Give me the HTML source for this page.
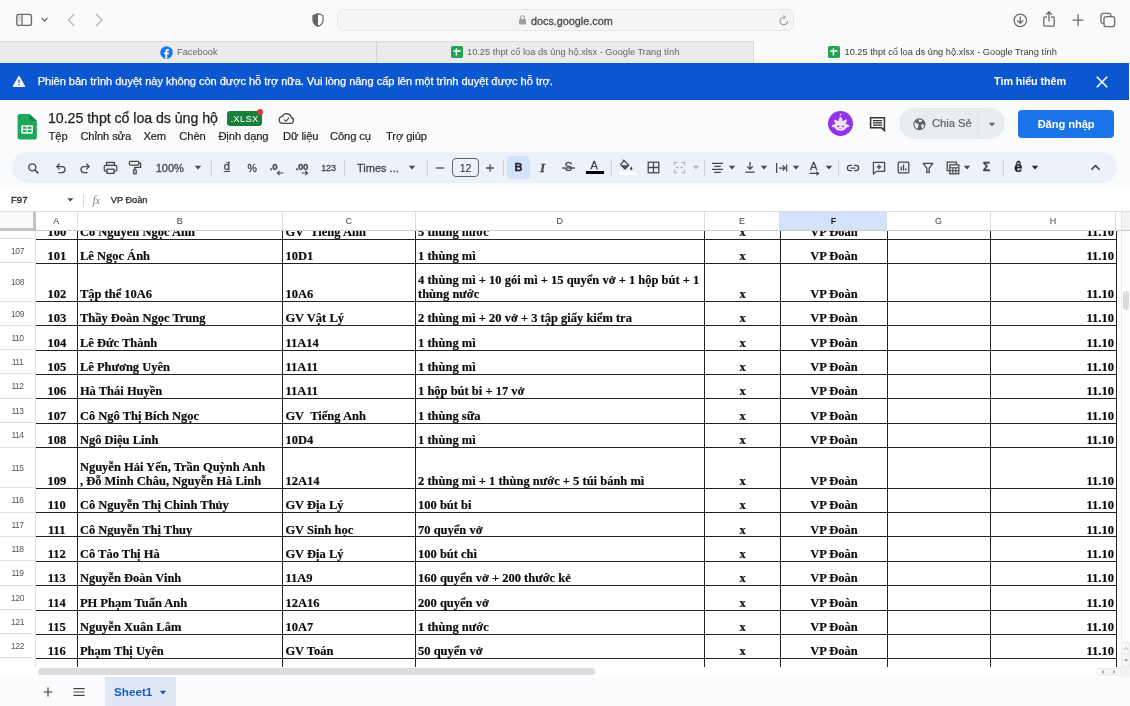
<!DOCTYPE html>
<html><head><meta charset="utf-8">
<style>
*{box-sizing:border-box;margin:0;padding:0}
html,body{width:1130px;height:706px;overflow:hidden;background:#fff;font-family:"Liberation Sans",sans-serif;}
.abs{position:absolute}
#root{position:relative;width:1130px;height:706px;overflow:hidden;will-change:transform}
/* Safari chrome */
#top{left:0;top:0;width:1130px;height:41px;background:#fafafa}
#url{left:337px;top:9px;width:457px;height:22px;border-radius:6px;background:#f5f5f5;border:1px solid #e7e7e7}
#urltxt{left:531px;top:14.5px;font-size:10.8px;color:#484848;-webkit-text-stroke:0.3px;letter-spacing:0px}
#tabs{left:0;top:41px;width:1130px;height:22px;background:#ebebeb;border-top:1px solid #dcdcdc}
.tab{top:41px;height:22px;font-size:9.25px;color:#4a4a4a;line-height:23px;white-space:nowrap}
#tab3{left:753px;width:377px;background:#fafafa;border-left:1px solid #d9d9d9}
#tabsep{left:376px;top:42px;width:1px;height:21px;background:#d4d4d4}
/* banner */
#banner{left:0;top:63px;width:1129.3px;height:37.2px;background:#0b57d0;color:#fff}
#bantxt{left:37.7px;top:75px;font-size:11.1px;color:#fff;-webkit-text-stroke:0.25px #fff;white-space:nowrap;letter-spacing:-0.05px}
#banmore{left:994px;top:75px;font-size:10.8px;color:#fff;white-space:nowrap;font-weight:bold;letter-spacing:-0.1px}
/* sheets header */
#hdr{left:0;top:100px;width:1130px;height:111px;background:#f9fbfd}
#title{left:48px;top:110px;font-size:14.2px;color:#1f1f1f;-webkit-text-stroke:0.25px;white-space:nowrap;letter-spacing:-0.05px}
.menu{top:130px;font-size:11.2px;color:#1f1f1f;-webkit-text-stroke:0.2px;white-space:nowrap;letter-spacing:-0.1px}
#xlsx{left:227px;top:111px;width:35px;height:15px;border-radius:3px;background:#188038;color:#fff;font-size:9.5px;line-height:15px;text-align:center;letter-spacing:0.2px}
#reddot{left:257px;top:109px;width:6px;height:6px;border-radius:3px;background:#e53935}
#share{left:899px;top:108px;width:106px;height:31px;border-radius:16px;background:#e9ecf0}
#sharediv{left:978px;top:108px;width:1px;height:31px;background:#e1e5ea}
#sharetxt{left:932px;top:117px;font-size:11.2px;color:#5f6368;-webkit-text-stroke:0.2px #5f6368;white-space:nowrap}
#login{left:1018px;top:110px;width:96.2px;height:28px;border-radius:4px;background:#1a73e8;color:#fff;font-size:11.2px;font-weight:bold;text-align:center;line-height:28px;letter-spacing:-0.1px}
#avatar{left:828px;top:111px;width:25px;height:25px;border-radius:13px;background:#9334e6}
#tb{left:12px;top:152px;width:1105px;height:31px;border-radius:16px;background:#edf2fa}
.tbt{font-size:12px;color:#444746;-webkit-text-stroke:0.3px;white-space:nowrap}
.sep{top:159.5px;width:1px;height:16px;background:#cdd0d6}
#fbar{left:0;top:187.5px;width:1130px;height:24px;background:#fff;border-bottom:1px solid #e1e1e1}
#cellref{left:11px;top:194px;font-size:9.6px;color:#1f1f1f;-webkit-text-stroke:0.3px}
#fxval{left:110.8px;top:194.6px;font-size:9.2px;color:#1f1f1f;-webkit-text-stroke:0.25px;white-space:nowrap}
/* grid */
#grid{left:0;top:211.5px;width:1130px;height:455.5px;background:#fff;overflow:hidden}
.ch{top:0;height:19.3px;background:#fff;border-right:1px solid #dadce0;border-bottom:1px solid #c8cacc;font-size:9px;color:#444;text-align:center;line-height:19.6px}
.rh{left:0;width:36px;background:#fff;border-right:1px solid #dadce0;border-bottom:1px solid #e1e1e1;font-size:8.5px;color:#54585d;text-align:center;letter-spacing:-0.45px}
.c{position:absolute;font-family:"Liberation Serif",serif;font-weight:bold;font-size:12.5px;color:#0c0c0c;-webkit-text-stroke:0.18px #0c0c0c;white-space:nowrap;line-height:14.6px}
.hl{position:absolute;left:36px;width:1081px;height:1px;background:#222}
.vl{position:absolute;top:0;width:1px;height:437px;background:#222}
#bottom{left:0;top:677px;width:1130px;height:29px;background:#f9fbfd}
#hscroll{left:0;top:667px;width:1130px;height:10px;background:#fff}
#hthumb{left:38px;top:668px;width:557px;height:7px;border-radius:4px;background:#dadce0}
#sheettab{left:105px;top:677px;width:71px;height:29px;background:#e0e8f6;color:#1a5cc8;font-size:11.7px;font-weight:bold;line-height:30px;padding-left:9px}
</style></head><body><div id="root">
<div id="top" class="abs"></div>
<!-- sidebar icon -->
<svg class="abs" style="left:15px;top:12px" width="20" height="16" viewBox="0 0 20 16"><rect x="1.8" y="2.4" width="14.6" height="11" rx="2.2" fill="none" stroke="#6b6b6b" stroke-width="1.4"/><line x1="7" y1="2.4" x2="7" y2="13.4" stroke="#6b6b6b" stroke-width="1.3"/><line x1="3.6" y1="5" x2="5.2" y2="5" stroke="#8a8a8a" stroke-width="0.8"/><line x1="3.6" y1="6.8" x2="5.2" y2="6.8" stroke="#8a8a8a" stroke-width="0.8"/><line x1="3.6" y1="8.6" x2="5.2" y2="8.6" stroke="#8a8a8a" stroke-width="0.8"/></svg>
<svg class="abs" style="left:40px;top:16px" width="10" height="8" viewBox="0 0 10 8"><path d="M2 2.4 L4.6 5 L7.2 2.4" fill="none" stroke="#606060" stroke-width="1.3" stroke-linecap="round" stroke-linejoin="round"/></svg>
<svg class="abs" style="left:65px;top:12px" width="12" height="16" viewBox="0 0 12 16"><path d="M8.8 2.6 L3.4 8 L8.8 13.4" fill="none" stroke="#b9b9b9" stroke-width="1.4" stroke-linecap="round" stroke-linejoin="round"/></svg>
<svg class="abs" style="left:93px;top:12px" width="12" height="16" viewBox="0 0 12 16"><path d="M3.6 2.6 L9 8 L3.6 13.4" fill="none" stroke="#b9b9b9" stroke-width="1.4" stroke-linecap="round" stroke-linejoin="round"/></svg>
<!-- shield -->
<svg class="abs" style="left:311px;top:12px" width="14" height="16" viewBox="0 0 14 16"><path d="M7 1.6 L12 3.5 V8 C12 11 10 13.2 7 14.4 C4 13.2 2 11 2 8 V3.5 Z" fill="#fff" stroke="#6c6c6c" stroke-width="1.3" stroke-linejoin="round"/><path d="M7 1.6 L2 3.5 V8 C2 11 4 13.2 7 14.4 Z" fill="#666"/></svg>
<div id="url" class="abs"></div>
<!-- lock -->
<svg class="abs" style="left:518px;top:14px" width="9" height="12" viewBox="0 0 9 12"><rect x="1" y="5" width="7" height="5.6" rx="1" fill="#a0a0a0"/><path d="M2.6 5.2 V3.6 a1.9 1.9 0 0 1 3.8 0 V5.2" fill="none" stroke="#a0a0a0" stroke-width="1.1"/></svg>
<div id="urltxt" class="abs">docs.google.com</div>
<!-- reload -->
<svg class="abs" style="left:778px;top:14px" width="12" height="13" viewBox="0 0 12 13"><path d="M9.6 7 A3.8 3.8 0 1 1 6 3.2" fill="none" stroke="#8a8a8a" stroke-width="1"/><path d="M5.4 1.2 L7.6 3.2 L5.4 5.2" fill="none" stroke="#8a8a8a" stroke-width="1" stroke-linejoin="round"/></svg>
<!-- download -->
<svg class="abs" style="left:1012px;top:12px" width="17" height="17" viewBox="0 0 17 17"><circle cx="8.3" cy="8.4" r="6.2" fill="none" stroke="#6c6c6c" stroke-width="1.25"/><path d="M8.3 5 V11 M5.8 8.7 L8.3 11.2 L10.8 8.7" fill="none" stroke="#6c6c6c" stroke-width="1.3" stroke-linecap="round" stroke-linejoin="round"/></svg>
<!-- share -->
<svg class="abs" style="left:1041px;top:10px" width="16" height="18" viewBox="0 0 16 18"><path d="M5.4 7 H4 a1.2 1.2 0 0 0 -1.2 1.2 V15 a1.2 1.2 0 0 0 1.2 1.2 H12 a1.2 1.2 0 0 0 1.2 -1.2 V8.2 A1.2 1.2 0 0 0 12 7 H10.6" fill="none" stroke="#6c6c6c" stroke-width="1.3" stroke-linecap="round"/><path d="M8 11 V2 M5.4 4.4 L8 1.8 L10.6 4.4" fill="none" stroke="#6c6c6c" stroke-width="1.3" stroke-linecap="round" stroke-linejoin="round"/></svg>
<!-- plus -->
<svg class="abs" style="left:1071px;top:13px" width="14" height="14" viewBox="0 0 14 14"><path d="M7.1 2 V12.2 M2 7.1 H12.2" stroke="#6c6c6c" stroke-width="1.35" stroke-linecap="round"/></svg>
<!-- tabs -->
<svg class="abs" style="left:1099px;top:12px" width="18" height="17" viewBox="0 0 18 17"><rect x="5" y="4.6" width="10.6" height="10" rx="2.2" fill="#fafafa" stroke="#6c6c6c" stroke-width="1.3"/><path d="M4.8 11.4 H4 a2 2 0 0 1 -2 -2 V3.4 a2 2 0 0 1 2 -2 H9.8 a2 2 0 0 1 2 2 V4.4" fill="none" stroke="#6c6c6c" stroke-width="1.3"/></svg>
<!-- tab bar -->
<div id="tabs" class="abs"></div>
<div id="tab3" class="abs tab"></div>
<div id="tabsep" class="abs"></div>
<!-- fb -->
<svg class="abs" style="left:159.5px;top:45.5px" width="13" height="13" viewBox="0 0 13 13"><circle cx="6.5" cy="6.5" r="6.3" fill="#1877f2"/><path d="M7.2 12.6 V8.2 H8.7 L9 6.5 H7.2 V5.4 c0 -.6 .3 -.9 .9 -.9 H9 V3 C8.7 2.96 8.2 2.9 7.7 2.9 C6.3 2.9 5.4 3.7 5.4 5.2 V6.5 H3.9 V8.2 H5.4 V12.6 Z" fill="#fff"/></svg>
<div class="abs tab" style="left:177px;color:#666">Facebook</div>
<svg class="abs" style="left:450.5px;top:46px" width="12" height="12" viewBox="0 0 12 12"><rect x="0" y="0" width="12" height="12" rx="1.8" fill="#23a455"/><path d="M2.4 5 H9.6 M5.4 2.6 V9.6" stroke="#fff" stroke-width="1.5"/></svg>
<div class="abs tab" style="left:467px;color:#666">10.25 thpt cổ loa ds ủng hộ.xlsx - Google Trang tính</div>
<svg class="abs" style="left:827.5px;top:46px" width="12" height="12" viewBox="0 0 12 12"><rect x="0" y="0" width="12" height="12" rx="1.8" fill="#23a455"/><path d="M2.4 5 H9.6 M5.4 2.6 V9.6" stroke="#fff" stroke-width="1.5"/></svg>
<div class="abs tab" style="left:844.5px;color:#3a3a3a">10.25 thpt cổ loa ds ủng hộ.xlsx - Google Trang tính</div>

<div id="banner" class="abs"></div>
<svg class="abs" style="left:12px;top:75px" width="14" height="13" viewBox="0 0 14 13"><path d="M7 1.2 L12.8 11.4 H1.2 Z" fill="#fff" stroke="#fff" stroke-width="1" stroke-linejoin="round"/><rect x="6.4" y="4.6" width="1.2" height="3.6" fill="#0b57d0"/><rect x="6.4" y="9" width="1.2" height="1.2" fill="#0b57d0"/></svg>
<div id="bantxt" class="abs">Phiên bản trình duyệt này không còn được hỗ trợ nữa. Vui lòng nâng cấp lên một trình duyệt được hỗ trợ.</div>
<div id="banmore" class="abs">Tìm hiểu thêm</div>
<svg class="abs" style="left:1095px;top:75px" width="14" height="14" viewBox="0 0 14 14"><path d="M1.8 1.8 L12.2 12.2 M12.2 1.8 L1.8 12.2" stroke="#fff" stroke-width="1.6" stroke-linecap="butt"/></svg>

<div id="hdr" class="abs"></div>
<!-- sheets logo -->
<svg class="abs" style="left:16.6px;top:112.6px" width="20.4" height="27.2" viewBox="0 0 22 30" preserveAspectRatio="none"><path d="M2.8 1 H13.6 L21.4 8.8 V27 a2.2 2.2 0 0 1 -2.2 2.2 H2.8 a2.2 2.2 0 0 1 -2.2 -2.2 V3.2 a2.2 2.2 0 0 1 2.2 -2.2 Z" fill="#1fa65c"/><path d="M13.6 1 L21.4 8.8 H15.4 A1.8 1.8 0 0 1 13.6 7 Z" fill="#16884a"/><rect x="4.6" y="13.4" width="12.6" height="9.4" rx="0.9" fill="#eaf7ee"/><rect x="6.4" y="15.2" width="3.8" height="2.2" fill="#1fa65c"/><rect x="11.8" y="15.2" width="3.8" height="2.2" fill="#1fa65c"/><rect x="6.4" y="18.8" width="3.8" height="2.2" fill="#1fa65c"/><rect x="11.8" y="18.8" width="3.8" height="2.2" fill="#1fa65c"/></svg>
<div id="title" class="abs">10.25 thpt cổ loa ds ủng hộ</div>
<div id="xlsx" class="abs">.XLSX</div>
<div id="reddot" class="abs"></div>
<!-- cloud -->
<svg class="abs" style="left:278px;top:112px" width="17" height="13" viewBox="0 0 17 13"><path d="M4.6 11.4 H12.6 a3 3 0 0 0 .6 -5.9 A4.6 4.6 0 0 0 4.4 4.6 A3.4 3.4 0 0 0 4.6 11.4 Z" fill="none" stroke="#444746" stroke-width="1.3" stroke-linejoin="round"/><path d="M6.2 7.6 L8 9.2 L11 5.8" fill="none" stroke="#444746" stroke-width="1.2"/></svg>
<div class="abs menu" style="left:48.6px">Tệp</div>
<div class="abs menu" style="left:80.4px">Chỉnh sửa</div>
<div class="abs menu" style="left:143.4px">Xem</div>
<div class="abs menu" style="left:179.3px">Chèn</div>
<div class="abs menu" style="left:218.4px">Định dạng</div>
<div class="abs menu" style="left:283px">Dữ liệu</div>
<div class="abs menu" style="left:330px">Công cụ</div>
<div class="abs menu" style="left:386px">Trợ giúp</div>
<!-- avatar -->
<div id="avatar" class="abs"></div>
<svg class="abs" style="left:828px;top:111px" width="25" height="25" viewBox="0 0 25 25"><path d="M12.5 5.6 C14 7.4 14.6 9 14.4 10.6 C15.6 9.4 17 8.8 18.8 8.8 C18.8 10.6 18.2 12 17.2 13 C19.6 13.2 21 14.2 21.4 15.4 C20.4 16 19.4 16.2 18.6 16.2 C17.6 18.6 15.2 19.8 12.5 19.8 C9.8 19.8 7.4 18.6 6.4 16.2 C5.6 16.2 4.6 16 3.6 15.4 C4 14.2 5.4 13.2 7.8 13 C6.8 12 6.2 10.6 6.2 8.8 C8 8.8 9.4 9.4 10.6 10.6 C10.4 9 11 7.4 12.5 5.6 Z" fill="#f1e4fb"/><circle cx="12.5" cy="3.6" r="0.8" fill="#f1e4fb"/><ellipse cx="10.1" cy="15.3" rx="1.25" ry="0.9" fill="#9334e6"/><ellipse cx="14.9" cy="15.3" rx="1.25" ry="0.9" fill="#9334e6"/><path d="M11.4 17.6 Q12.5 18.3 13.6 17.6" fill="none" stroke="#9334e6" stroke-width="0.6"/></svg>
<!-- comment icon -->
<svg class="abs" style="left:868.5px;top:116px" width="17" height="16" viewBox="0 0 17 16"><path d="M1.6 1.8 H15.4 V14.6 L12.4 11.8 H1.6 Z" fill="none" stroke="#333" stroke-width="1.5" stroke-linejoin="miter"/><path d="M4 4.6 H13 M4 6.8 H13 M4 9 H13" stroke="#333" stroke-width="1.25"/></svg>
<div id="share" class="abs"></div>
<div id="sharediv" class="abs"></div>
<svg class="abs" style="left:913px;top:117.5px" width="13" height="13" viewBox="0 0 13 13"><circle cx="6.4" cy="6.3" r="6" fill="#5f6368"/><path d="M1.7 4.6 C2.6 4.4 3.4 4.8 4 5.4 C4.6 6 5.6 6 5.8 6.8 C6 7.6 5.2 8 5.2 8.8 C5.2 9.6 4.8 10.4 4.2 10.8 C2.6 10 1.5 8.3 1.5 6.3 C1.5 5.7 1.6 5.1 1.7 4.6 Z" fill="#e9ecf0"/><path d="M5.6 1.5 C6.8 1.3 8.2 1.6 9.2 2.4 C9 3.2 8.2 3.4 7.8 4 C7.4 4.6 6.6 4.4 6.2 3.8 C5.8 3.2 5.4 2.3 5.6 1.5 Z" fill="#e9ecf0"/><path d="M8.4 6.4 C9.4 6 10.6 6.4 11.2 7.2 C11 8.6 10.2 9.8 9.2 10.6 C8.6 9.6 7.8 7.6 8.4 6.4 Z" fill="#e9ecf0"/></svg>
<div id="sharetxt" class="abs">Chia Sẻ</div>
<svg class="abs" style="left:988px;top:122px" width="8" height="5" viewBox="0 0 8 5"><path d="M0.9 0.8 H7.1 L4 4.2 Z" fill="#5f6368"/></svg>
<div id="login" class="abs">Đăng nhập</div>
<!-- toolbar -->
<div id="tb" class="abs"></div>
<div class="abs" style="left:507px;top:155.5px;width:23px;height:23px;border-radius:4px;background:#d3e3fd"></div>
<div class="abs sep" style="left:211px"></div>
<div class="abs sep" style="left:344px"></div>
<div class="abs sep" style="left:427px"></div>
<div class="abs sep" style="left:503px"></div>
<div class="abs sep" style="left:611px"></div>
<div class="abs sep" style="left:704px"></div>
<div class="abs sep" style="left:838px"></div>
<div class="abs sep" style="left:1003px"></div>
<svg class="abs" style="left:27.3px;top:161.5px" width="13" height="13" viewBox="0 0 13 13"><circle cx="5.3" cy="5.3" r="3.5" fill="none" stroke="#444746" stroke-width="1.35"/><path d="M7.9 7.9 L11.4 11.4" stroke="#444746" stroke-width="1.5" stroke-linecap="butt"/></svg>
<svg class="abs" style="left:54.3px;top:162.0px" width="13" height="12" viewBox="0 0 13 12"><path d="M3.4 4.6 H8 a3 3 0 0 1 0 6 H4.4" fill="none" stroke="#444746" stroke-width="1.25"/><path d="M5.6 1.8 L2.8 4.6 L5.6 7.4" fill="none" stroke="#444746" stroke-width="1.25"/></svg>
<svg class="abs" style="left:78.5px;top:162.0px" width="13" height="12" viewBox="0 0 13 12"><path d="M9.6 4.6 H5 a3 3 0 0 0 0 6 H8.6" fill="none" stroke="#444746" stroke-width="1.25"/><path d="M7.4 1.8 L10.2 4.6 L7.4 7.4" fill="none" stroke="#444746" stroke-width="1.25"/></svg>
<svg class="abs" style="left:102.8px;top:160.5px" width="15" height="14" viewBox="0 0 15 14"><rect x="3.6" y="1.4" width="7.8" height="3" fill="none" stroke="#444746" stroke-width="1.3"/><rect x="1.2" y="4.4" width="12.6" height="5.8" rx="1.6" fill="none" stroke="#444746" stroke-width="1.25"/><rect x="4" y="8.2" width="7" height="4.2" fill="#edf2fa" stroke="#444746" stroke-width="1.3"/></svg>
<svg class="abs" style="left:128.0px;top:160.0px" width="14" height="15" viewBox="0 0 14 15"><rect x="1.4" y="1.4" width="9.4" height="3.6" rx="0.8" fill="none" stroke="#444746" stroke-width="1.25"/><path d="M10.8 3.2 H12.6 V7.4 H6.8 V9.6" fill="none" stroke="#444746" stroke-width="1.3"/><rect x="5.6" y="9.6" width="2.6" height="4.2" rx="0.6" fill="none" stroke="#444746" stroke-width="1.3"/></svg>
<div class="abs tbt" style="left:155.7px;top:162px;font-size:11px;font-weight:normal;">100%</div>
<svg class="abs" style="left:193.8px;top:165.3px" width="8" height="5" viewBox="0 0 8 5"><path d="M0.8 0.8 H7.2 L4 4.4 Z" fill="#444746"/></svg>
<div class="abs tbt" style="left:223.8px;top:160px;font-size:11px;font-weight:normal;text-decoration:underline">đ</div>
<div class="abs tbt" style="left:247.5px;top:161.5px;font-size:10.5px;font-weight:normal;">%</div>
<div class="abs tbt" style="left:269.8px;top:160.8px;font-size:9.6px;font-weight:bold;letter-spacing:-0.2px">.0</div>
<svg class="abs" style="left:276.0px;top:170.0px" width="8" height="6" viewBox="0 0 8 6"><path d="M7.4 3 H1.6 M3.6 0.8 L1.4 3 L3.6 5.2" fill="none" stroke="#444746" stroke-width="1.2"/></svg>
<div class="abs tbt" style="left:295.6px;top:160.8px;font-size:9.6px;font-weight:bold;letter-spacing:-0.3px">.00</div>
<svg class="abs" style="left:300.5px;top:170.0px" width="8" height="6" viewBox="0 0 8 6"><path d="M0.6 3 H6.4 M4.4 0.8 L6.6 3 L4.4 5.2" fill="none" stroke="#444746" stroke-width="1.2"/></svg>
<div class="abs tbt" style="left:321.2px;top:162.6px;font-size:9px;font-weight:normal;letter-spacing:-0.15px">123</div>
<div class="abs tbt" style="left:357px;top:162px;font-size:11px;font-weight:normal;">Times ...</div>
<svg class="abs" style="left:407.6px;top:165.3px" width="8" height="5" viewBox="0 0 8 5"><path d="M0.8 0.8 H7.2 L4 4.4 Z" fill="#444746"/></svg>
<svg class="abs" style="left:434.8px;top:165.5px" width="10" height="4" viewBox="0 0 10 4"><path d="M1.2 2 H8.8" stroke="#444746" stroke-width="1.3"/></svg>
<div class="abs" style="left:452px;top:157.5px;width:27px;height:19px;border:1px solid #5f6368;border-radius:4px;font-size:10.5px;color:#1f1f1f;text-align:center;line-height:18px">12</div>
<svg class="abs" style="left:485.3px;top:162.5px" width="10" height="10" viewBox="0 0 10 10"><path d="M1.2 5 H8.8 M5 1.2 V8.8" stroke="#444746" stroke-width="1.3"/></svg>
<div class="abs tbt" style="left:514.6px;top:161.3px;font-size:11px;font-weight:bold;color:#1f1f1f">B</div>
<div class="abs tbt" style="left:540px;top:159.5px;font-size:13px;font-weight:bold;font-style:italic;font-family:'Liberation Serif',serif">I</div>
<div class="abs tbt" style="left:564.6px;top:160.2px;font-size:12px;font-weight:normal;">S</div>
<svg class="abs" style="left:562.3px;top:166.6px" width="13" height="2" viewBox="0 0 13 2"><path d="M0 1 H13" stroke="#444746" stroke-width="1.3"/></svg>
<div class="abs tbt" style="left:590.6px;top:159.3px;font-size:11px;font-weight:normal;">A</div>
<div class="abs" style="left:585.7px;top:171.2px;width:18px;height:3px;background:#000"></div>
<svg class="abs" style="left:619.0px;top:159.0px" width="15" height="13" viewBox="0 0 15 13"><path d="M5.2 1.6 L9.8 6.2 L6 10 L1.6 5.6 Z" fill="none" stroke="#444746" stroke-width="1.25" stroke-linejoin="round"/><path d="M2.4 6.2 H9.2 L6 9.6 Z" fill="#444746"/><path d="M3.6 0.6 L5.8 2.8" stroke="#444746" stroke-width="1.2"/><path d="M12.2 7.6 c.8 1 1.2 1.6 1.2 2.2 a1.2 1.2 0 0 1 -2.4 0 c0 -.6 .4 -1.2 1.2 -2.2 Z" fill="#444746"/></svg>
<div class="abs" style="left:618.5px;top:171.5px;width:17px;height:3px;background:#fff"></div>
<svg class="abs" style="left:646.5px;top:161.0px" width="13" height="13" viewBox="0 0 13 13"><rect x="1.2" y="1.2" width="10.6" height="10.6" fill="none" stroke="#444746" stroke-width="1.25"/><path d="M6.5 1.2 V11.8 M1.2 6.5 H11.8" stroke="#444746" stroke-width="1.3"/></svg>
<svg class="abs" style="left:672.8px;top:161.0px" width="13" height="13" viewBox="0 0 13 13"><path d="M1.4 4.4 V1.4 H4.6 M8.4 1.4 H11.6 V4.4 M11.6 8.6 V11.6 H8.4 M4.6 11.6 H1.4 V8.6" fill="none" stroke="#b4b8bd" stroke-width="1.25"/><path d="M3 6.5 H5.6 M10 6.5 H7.4" stroke="#b4b8bd" stroke-width="1.3"/></svg>
<svg class="abs" style="left:692.0px;top:165.3px" width="8" height="5" viewBox="0 0 8 5"><path d="M0.8 0.8 H7.2 L4 4.4 Z" fill="#b4b8bd"/></svg>
<svg class="abs" style="left:711.2px;top:161.5px" width="13" height="12" viewBox="0 0 13 12"><path d="M1 1.4 H12 M3.2 4.4 H9.8 M1 7.4 H12 M3.2 10.4 H9.8" stroke="#444746" stroke-width="1.3"/></svg>
<svg class="abs" style="left:728.3px;top:165.3px" width="8" height="5" viewBox="0 0 8 5"><path d="M0.8 0.8 H7.2 L4 4.4 Z" fill="#444746"/></svg>
<svg class="abs" style="left:744.0px;top:161.0px" width="12" height="13" viewBox="0 0 12 13"><path d="M6 1 V8 M3.2 5.4 L6 8.2 L8.8 5.4" fill="none" stroke="#444746" stroke-width="1.25"/><path d="M1.4 11.2 H10.6" stroke="#444746" stroke-width="1.25"/></svg>
<svg class="abs" style="left:760.0px;top:165.3px" width="8" height="5" viewBox="0 0 8 5"><path d="M0.8 0.8 H7.2 L4 4.4 Z" fill="#444746"/></svg>
<svg class="abs" style="left:774.9px;top:161.5px" width="13" height="12" viewBox="0 0 13 12"><path d="M1.6 1 V11" stroke="#444746" stroke-width="1.25"/><path d="M4 6 H10 M7.6 3.4 L10.2 6 L7.6 8.6" fill="none" stroke="#444746" stroke-width="1.25"/><path d="M11.6 2.6 V9.4" stroke="#444746" stroke-width="1.2"/></svg>
<svg class="abs" style="left:791.8px;top:165.3px" width="8" height="5" viewBox="0 0 8 5"><path d="M0.8 0.8 H7.2 L4 4.4 Z" fill="#444746"/></svg>
<div class="abs tbt" style="left:810px;top:159.6px;font-size:11px;font-weight:normal;">A</div>
<svg class="abs" style="left:808.5px;top:170.7px" width="12" height="5" viewBox="0 0 12 5"><path d="M0.6 2.4 H9 M7.4 0.6 L9.6 2.6 L7.4 4.4" fill="none" stroke="#444746" stroke-width="1.1"/></svg>
<svg class="abs" style="left:824.5px;top:165.3px" width="8" height="5" viewBox="0 0 8 5"><path d="M0.8 0.8 H7.2 L4 4.4 Z" fill="#444746"/></svg>
<svg class="abs" style="left:846.2px;top:163.5px" width="14" height="8" viewBox="0 0 14 8"><path d="M6 1.4 H4 a2.6 2.6 0 0 0 0 5.2 H6 M8 1.4 H10 a2.6 2.6 0 0 1 0 5.2 H8 M4.6 4 H9.4" fill="none" stroke="#444746" stroke-width="1.25"/></svg>
<svg class="abs" style="left:871.7px;top:161.0px" width="14" height="14" viewBox="0 0 14 14"><path d="M1.4 1.4 H12.6 V10.4 H4.4 L1.4 13 Z" fill="none" stroke="#444746" stroke-width="1.25" stroke-linejoin="round"/><path d="M7 3.4 V8.4 M4.5 5.9 H9.5" stroke="#444746" stroke-width="1.3"/></svg>
<svg class="abs" style="left:897.2px;top:161.0px" width="13" height="13" viewBox="0 0 13 13"><rect x="1.2" y="1.2" width="10.6" height="10.6" rx="1" fill="none" stroke="#444746" stroke-width="1.25"/><path d="M4.2 9.6 V5.4 M6.5 9.6 V3.6 M8.8 9.6 V7.2" stroke="#444746" stroke-width="1.3"/></svg>
<svg class="abs" style="left:922.4px;top:161.5px" width="12" height="12" viewBox="0 0 12 12"><path d="M1.2 1.4 H10.8 L7.2 6.2 V10.4 H4.8 V6.2 Z" fill="none" stroke="#444746" stroke-width="1.25" stroke-linejoin="round"/></svg>
<svg class="abs" style="left:945.5px;top:161.0px" width="14" height="14" viewBox="0 0 14 14"><path d="M3 9.6 H1.2 V1.2 H10.4 V3" fill="none" stroke="#444746" stroke-width="1.3"/><rect x="3.8" y="3.8" width="9" height="9" fill="none" stroke="#444746" stroke-width="1.25"/><path d="M3.8 6.8 H12.8 M6.8 6.8 V12.8 M9.8 6.8 V12.8 M3.8 9.8 H12.8" stroke="#444746" stroke-width="1.1"/></svg>
<svg class="abs" style="left:962.6px;top:165.3px" width="8" height="5" viewBox="0 0 8 5"><path d="M0.8 0.8 H7.2 L4 4.4 Z" fill="#444746"/></svg>
<div class="abs tbt" style="left:982.8px;top:160px;font-size:12.5px;font-weight:bold;">Σ</div>
<div class="abs tbt" style="left:1014.2px;top:159px;font-size:14.5px;font-weight:bold;color:#1f1f1f">ê</div>
<svg class="abs" style="left:1031.0px;top:165.3px" width="8" height="5" viewBox="0 0 8 5"><path d="M0.8 0.8 H7.2 L4 4.4 Z" fill="#1f1f1f"/></svg>
<svg class="abs" style="left:1089.9px;top:164.0px" width="11" height="7" viewBox="0 0 11 7"><path d="M1.4 5.6 L5.5 1.6 L9.6 5.6" fill="none" stroke="#444746" stroke-width="1.5"/></svg>
<!-- formula bar -->
<div id="fbar" class="abs"></div>
<div id="cellref" class="abs">F97</div>
<svg class="abs" style="left:66px;top:197px" width="9" height="6" viewBox="0 0 9 6"><path d="M1.4 1.2 H7.4 L4.4 4.6 Z" fill="#444746"/></svg>
<div class="abs" style="left:83px;top:194px;width:1px;height:13px;background:#d9d9d9"></div>
<div class="abs" style="left:92.5px;top:192.5px;font-family:'Liberation Serif',serif;font-style:italic;font-size:12px;color:#8a8a8a;letter-spacing:-0.3px">f<span style="font-size:10.5px">x</span></div>
<div id="fxval" class="abs">VP Đoàn</div>

<div id="grid" class="abs">
<div class="abs" id="gbody" style="left:0;top:19.3px;width:1130px;height:436.2px;overflow:hidden">
<div class="abs rh" style="top:8.5px;height:24.1px;line-height:24.7px">107</div>
<div class="abs rh" style="top:32.6px;height:38.3px;line-height:38.9px">108</div>
<div class="abs rh" style="top:70.9px;height:24.1px;line-height:24.7px">109</div>
<div class="abs rh" style="top:95.0px;height:24.4px;line-height:25.0px">110</div>
<div class="abs rh" style="top:119.4px;height:24.1px;line-height:24.7px">111</div>
<div class="abs rh" style="top:143.5px;height:24.4px;line-height:25.0px">112</div>
<div class="abs rh" style="top:167.9px;height:24.4px;line-height:25.0px">113</div>
<div class="abs rh" style="top:192.3px;height:24.6px;line-height:25.2px">114</div>
<div class="abs rh" style="top:216.9px;height:40.8px;line-height:41.4px">115</div>
<div class="abs rh" style="top:257.7px;height:24.1px;line-height:24.7px">116</div>
<div class="abs rh" style="top:281.8px;height:24.4px;line-height:25.0px">117</div>
<div class="abs rh" style="top:306.2px;height:24.5px;line-height:25.1px">118</div>
<div class="abs rh" style="top:330.7px;height:24.1px;line-height:24.7px">119</div>
<div class="abs rh" style="top:354.8px;height:24.4px;line-height:25.0px">120</div>
<div class="abs rh" style="top:379.2px;height:24.1px;line-height:24.7px">121</div>
<div class="abs rh" style="top:403.3px;height:24.4px;line-height:25.0px">122</div>
<div class="abs rh" style="top:-15.8px;height:24.3px"></div>
<div class="abs rh" style="top:427.7px;height:24.3px;border-bottom:none"></div>
<div class="c" style="left:36px;width:41.5px;text-align:center;top:-5.82px">100</div>
<div class="c" style="left:79.9px;top:-5.82px">Cô Nguyễn Ngọc Anh</div>
<div class="c" style="left:285.4px;top:-5.82px">GV&nbsp; Tiếng Anh</div>
<div class="c" style="left:418.0px;top:-5.82px">5 thùng nước</div>
<div class="c" style="left:704.7px;width:75.7px;text-align:center;top:-5.82px">x</div>
<div class="c" style="left:780.4px;width:107.1px;text-align:center;top:-5.82px">VP Đoàn</div>
<div class="c" style="left:990.6px;width:123.4px;text-align:right;top:-5.82px">11.10</div>
<div class="c" style="left:36px;width:41.5px;text-align:center;top:18.28px">101</div>
<div class="c" style="left:79.9px;top:18.28px">Lê Ngọc Ánh</div>
<div class="c" style="left:285.4px;top:18.28px">10D1</div>
<div class="c" style="left:418.0px;top:18.28px">1 thùng mì</div>
<div class="c" style="left:704.7px;width:75.7px;text-align:center;top:18.28px">x</div>
<div class="c" style="left:780.4px;width:107.1px;text-align:center;top:18.28px">VP Đoàn</div>
<div class="c" style="left:990.6px;width:123.4px;text-align:right;top:18.28px">11.10</div>
<div class="c" style="left:36px;width:41.5px;text-align:center;top:56.58px">102</div>
<div class="c" style="left:79.9px;top:56.58px">Tập thể 10A6</div>
<div class="c" style="left:285.4px;top:56.58px">10A6</div>
<div class="c" style="left:418.0px;top:41.98px">4 thùng mì + 10 gói mì + 15 quyển vở + 1 hộp bút + 1</div>
<div class="c" style="left:418.0px;top:56.58px">thùng nước</div>
<div class="c" style="left:704.7px;width:75.7px;text-align:center;top:56.58px">x</div>
<div class="c" style="left:780.4px;width:107.1px;text-align:center;top:56.58px">VP Đoàn</div>
<div class="c" style="left:990.6px;width:123.4px;text-align:right;top:56.58px">11.10</div>
<div class="c" style="left:36px;width:41.5px;text-align:center;top:80.68px">103</div>
<div class="c" style="left:79.9px;top:80.68px">Thầy Đoàn Ngọc Trung</div>
<div class="c" style="left:285.4px;top:80.68px">GV Vật Lý</div>
<div class="c" style="left:418.0px;top:80.68px">2 thùng mì + 20 vở + 3 tập giấy kiểm tra</div>
<div class="c" style="left:704.7px;width:75.7px;text-align:center;top:80.68px">x</div>
<div class="c" style="left:780.4px;width:107.1px;text-align:center;top:80.68px">VP Đoàn</div>
<div class="c" style="left:990.6px;width:123.4px;text-align:right;top:80.68px">11.10</div>
<div class="c" style="left:36px;width:41.5px;text-align:center;top:105.08px">104</div>
<div class="c" style="left:79.9px;top:105.08px">Lê Đức Thành</div>
<div class="c" style="left:285.4px;top:105.08px">11A14</div>
<div class="c" style="left:418.0px;top:105.08px">1 thùng mì</div>
<div class="c" style="left:704.7px;width:75.7px;text-align:center;top:105.08px">x</div>
<div class="c" style="left:780.4px;width:107.1px;text-align:center;top:105.08px">VP Đoàn</div>
<div class="c" style="left:990.6px;width:123.4px;text-align:right;top:105.08px">11.10</div>
<div class="c" style="left:36px;width:41.5px;text-align:center;top:129.18px">105</div>
<div class="c" style="left:79.9px;top:129.18px">Lê Phương Uyên</div>
<div class="c" style="left:285.4px;top:129.18px">11A11</div>
<div class="c" style="left:418.0px;top:129.18px">1 thùng mì</div>
<div class="c" style="left:704.7px;width:75.7px;text-align:center;top:129.18px">x</div>
<div class="c" style="left:780.4px;width:107.1px;text-align:center;top:129.18px">VP Đoàn</div>
<div class="c" style="left:990.6px;width:123.4px;text-align:right;top:129.18px">11.10</div>
<div class="c" style="left:36px;width:41.5px;text-align:center;top:153.58px">106</div>
<div class="c" style="left:79.9px;top:153.58px">Hà Thái Huyền</div>
<div class="c" style="left:285.4px;top:153.58px">11A11</div>
<div class="c" style="left:418.0px;top:153.58px">1 hộp bút bi + 17 vở</div>
<div class="c" style="left:704.7px;width:75.7px;text-align:center;top:153.58px">x</div>
<div class="c" style="left:780.4px;width:107.1px;text-align:center;top:153.58px">VP Đoàn</div>
<div class="c" style="left:990.6px;width:123.4px;text-align:right;top:153.58px">11.10</div>
<div class="c" style="left:36px;width:41.5px;text-align:center;top:177.98px">107</div>
<div class="c" style="left:79.9px;top:177.98px">Cô Ngô Thị Bích Ngọc</div>
<div class="c" style="left:285.4px;top:177.98px">GV&nbsp; Tiếng Anh</div>
<div class="c" style="left:418.0px;top:177.98px">1 thùng sữa</div>
<div class="c" style="left:704.7px;width:75.7px;text-align:center;top:177.98px">x</div>
<div class="c" style="left:780.4px;width:107.1px;text-align:center;top:177.98px">VP Đoàn</div>
<div class="c" style="left:990.6px;width:123.4px;text-align:right;top:177.98px">11.10</div>
<div class="c" style="left:36px;width:41.5px;text-align:center;top:202.58px">108</div>
<div class="c" style="left:79.9px;top:202.58px">Ngô Diệu Linh</div>
<div class="c" style="left:285.4px;top:202.58px">10D4</div>
<div class="c" style="left:418.0px;top:202.58px">1 thùng mì</div>
<div class="c" style="left:704.7px;width:75.7px;text-align:center;top:202.58px">x</div>
<div class="c" style="left:780.4px;width:107.1px;text-align:center;top:202.58px">VP Đoàn</div>
<div class="c" style="left:990.6px;width:123.4px;text-align:right;top:202.58px">11.10</div>
<div class="c" style="left:36px;width:41.5px;text-align:center;top:243.38px">109</div>
<div class="c" style="left:79.9px;top:228.78px">Nguyễn Hải Yến, Trần Quỳnh Anh</div>
<div class="c" style="left:79.9px;top:243.38px">, Đỗ Minh Châu, Nguyễn Hà Linh</div>
<div class="c" style="left:285.4px;top:243.38px">12A14</div>
<div class="c" style="left:418.0px;top:243.38px">2 thùng mì + 1 thùng nước + 5 túi bánh mì</div>
<div class="c" style="left:704.7px;width:75.7px;text-align:center;top:243.38px">x</div>
<div class="c" style="left:780.4px;width:107.1px;text-align:center;top:243.38px">VP Đoàn</div>
<div class="c" style="left:990.6px;width:123.4px;text-align:right;top:243.38px">11.10</div>
<div class="c" style="left:36px;width:41.5px;text-align:center;top:267.48px">110</div>
<div class="c" style="left:79.9px;top:267.48px">Cô Nguyễn Thị Chinh Thủy</div>
<div class="c" style="left:285.4px;top:267.48px">GV Địa Lý</div>
<div class="c" style="left:418.0px;top:267.48px">100 bút bi</div>
<div class="c" style="left:704.7px;width:75.7px;text-align:center;top:267.48px">x</div>
<div class="c" style="left:780.4px;width:107.1px;text-align:center;top:267.48px">VP Đoàn</div>
<div class="c" style="left:990.6px;width:123.4px;text-align:right;top:267.48px">11.10</div>
<div class="c" style="left:36px;width:41.5px;text-align:center;top:291.88px">111</div>
<div class="c" style="left:79.9px;top:291.88px">Cô Nguyễn Thị Thuy</div>
<div class="c" style="left:285.4px;top:291.88px">GV Sinh học</div>
<div class="c" style="left:418.0px;top:291.88px">70 quyển vở</div>
<div class="c" style="left:704.7px;width:75.7px;text-align:center;top:291.88px">x</div>
<div class="c" style="left:780.4px;width:107.1px;text-align:center;top:291.88px">VP Đoàn</div>
<div class="c" style="left:990.6px;width:123.4px;text-align:right;top:291.88px">11.10</div>
<div class="c" style="left:36px;width:41.5px;text-align:center;top:316.38px">112</div>
<div class="c" style="left:79.9px;top:316.38px">Cô Tào Thị Hà</div>
<div class="c" style="left:285.4px;top:316.38px">GV Địa Lý</div>
<div class="c" style="left:418.0px;top:316.38px">100 bút chì</div>
<div class="c" style="left:704.7px;width:75.7px;text-align:center;top:316.38px">x</div>
<div class="c" style="left:780.4px;width:107.1px;text-align:center;top:316.38px">VP Đoàn</div>
<div class="c" style="left:990.6px;width:123.4px;text-align:right;top:316.38px">11.10</div>
<div class="c" style="left:36px;width:41.5px;text-align:center;top:340.48px">113</div>
<div class="c" style="left:79.9px;top:340.48px">Nguyễn Đoàn Vinh</div>
<div class="c" style="left:285.4px;top:340.48px">11A9</div>
<div class="c" style="left:418.0px;top:340.48px">160 quyển vở + 200 thước kẻ</div>
<div class="c" style="left:704.7px;width:75.7px;text-align:center;top:340.48px">x</div>
<div class="c" style="left:780.4px;width:107.1px;text-align:center;top:340.48px">VP Đoàn</div>
<div class="c" style="left:990.6px;width:123.4px;text-align:right;top:340.48px">11.10</div>
<div class="c" style="left:36px;width:41.5px;text-align:center;top:364.88px">114</div>
<div class="c" style="left:79.9px;top:364.88px">PH Phạm Tuấn Anh</div>
<div class="c" style="left:285.4px;top:364.88px">12A16</div>
<div class="c" style="left:418.0px;top:364.88px">200 quyển vở</div>
<div class="c" style="left:704.7px;width:75.7px;text-align:center;top:364.88px">x</div>
<div class="c" style="left:780.4px;width:107.1px;text-align:center;top:364.88px">VP Đoàn</div>
<div class="c" style="left:990.6px;width:123.4px;text-align:right;top:364.88px">11.10</div>
<div class="c" style="left:36px;width:41.5px;text-align:center;top:388.98px">115</div>
<div class="c" style="left:79.9px;top:388.98px">Nguyễn Xuân Lâm</div>
<div class="c" style="left:285.4px;top:388.98px">10A7</div>
<div class="c" style="left:418.0px;top:388.98px">1 thùng nước</div>
<div class="c" style="left:704.7px;width:75.7px;text-align:center;top:388.98px">x</div>
<div class="c" style="left:780.4px;width:107.1px;text-align:center;top:388.98px">VP Đoàn</div>
<div class="c" style="left:990.6px;width:123.4px;text-align:right;top:388.98px">11.10</div>
<div class="c" style="left:36px;width:41.5px;text-align:center;top:413.38px">116</div>
<div class="c" style="left:79.9px;top:413.38px">Phạm Thị Uyên</div>
<div class="c" style="left:285.4px;top:413.38px">GV Toán</div>
<div class="c" style="left:418.0px;top:413.38px">50 quyển vở</div>
<div class="c" style="left:704.7px;width:75.7px;text-align:center;top:413.38px">x</div>
<div class="c" style="left:780.4px;width:107.1px;text-align:center;top:413.38px">VP Đoàn</div>
<div class="c" style="left:990.6px;width:123.4px;text-align:right;top:413.38px">11.10</div>
<div class="hl" style="top:8.20px"></div>
<div class="hl" style="top:32.20px"></div>
<div class="hl" style="top:70.20px"></div>
<div class="hl" style="top:94.20px"></div>
<div class="hl" style="top:119.20px"></div>
<div class="hl" style="top:143.20px"></div>
<div class="hl" style="top:167.20px"></div>
<div class="hl" style="top:192.20px"></div>
<div class="hl" style="top:216.20px"></div>
<div class="hl" style="top:257.20px"></div>
<div class="hl" style="top:281.20px"></div>
<div class="hl" style="top:305.20px"></div>
<div class="hl" style="top:330.20px"></div>
<div class="hl" style="top:354.20px"></div>
<div class="hl" style="top:379.20px"></div>
<div class="hl" style="top:403.20px"></div>
<div class="hl" style="top:427.20px"></div>
<div class="vl" style="left:77px"></div>
<div class="vl" style="left:282px"></div>
<div class="vl" style="left:415px"></div>
<div class="vl" style="left:704px"></div>
<div class="vl" style="left:780px"></div>
<div class="vl" style="left:887px"></div>
<div class="vl" style="left:990px"></div>
<div class="vl" style="left:1116px"></div>
<div class="abs" style="left:1120.5px;top:0;width:9.5px;height:437px;background:#fdfdfd;border-left:1px solid #efefef"></div>
<div class="abs" style="left:1122.5px;top:60px;width:6.5px;height:19px;border-radius:3.5px;background:#dadce0"></div>
<div class="abs" style="left:1120.5px;top:411.5px;width:9.5px;height:12px;background:#f8f8f8;border:1px solid #ececec"></div>
<div class="abs" style="left:1120.5px;top:423.5px;width:9.5px;height:12.5px;background:#f8f8f8;border:1px solid #ececec"></div>
<svg class="abs" style="left:1122.5px;top:415px" width="6" height="5" viewBox="0 0 6 5"><path d="M0.8 3.8 L3 1.4 L5.2 3.8" fill="none" stroke="#b0b0b0" stroke-width="1"/></svg>
<svg class="abs" style="left:1122.5px;top:427.5px" width="6" height="5" viewBox="0 0 6 5"><path d="M0.6 1.2 H5.4 L3 4 Z" fill="#a8a8a8"/></svg>
</div>
<div class="abs ch" style="left:0;width:35.7px;background:#f8f9fa;border-right:3px solid #c2c2c2;border-bottom:3px solid #c2c2c2"></div>
<div class="abs ch" style="left:36px;width:41.5px">A</div>
<div class="abs ch" style="left:77.5px;width:205.5px">B</div>
<div class="abs ch" style="left:283px;width:132.6px">C</div>
<div class="abs ch" style="left:415.6px;width:289.1px">D</div>
<div class="abs ch" style="left:704.7px;width:75.7px">E</div>
<div class="abs ch" style="left:780.4px;width:107.1px;background:#d3e3fd;color:#1f1f1f;font-weight:bold">F</div>
<div class="abs ch" style="left:887.5px;width:103.1px">G</div>
<div class="abs ch" style="left:990.6px;width:125.9px">H</div>
<div class="abs ch" style="left:1116.5px;width:4px;border-right:none"></div>
<div class="abs ch" style="left:1120.5px;width:9.5px;border-right:none;background:#f3f3f3;border-left:1px solid #e4e4e4"></div>
</div>
<div id="hscroll" class="abs"></div>
<div id="hthumb" class="abs"></div>
<div class="abs" style="left:1096.5px;top:667.5px;width:11.5px;height:8.5px;background:#f8f8f8;border:1px solid #ececec"></div>
<div class="abs" style="left:1108.5px;top:667.5px;width:12px;height:8.5px;background:#f8f8f8;border:1px solid #ececec"></div>
<div class="abs" style="left:1120.5px;top:666.5px;width:9.5px;height:10.5px;background:#f3f3f3"></div>
<svg class="abs" style="left:1100px;top:669px" width="5" height="6" viewBox="0 0 5 6"><path d="M3.8 0.8 V5.2 L1.2 3 Z" fill="#a8a8a8"/></svg>
<svg class="abs" style="left:1112px;top:669px" width="5" height="6" viewBox="0 0 5 6"><path d="M1.2 0.8 V5.2 L3.8 3 Z" fill="#a8a8a8"/></svg>
<div id="bottom" class="abs"></div>
<div id="sheettab" class="abs">Sheet1</div>
<svg class="abs" style="left:159px;top:690px" width="8" height="5" viewBox="0 0 8 5"><path d="M0.8 0.8 H7.2 L4 4.4 Z" fill="#0b57d0"/></svg>
<svg class="abs" style="left:42px;top:686px" width="12" height="12" viewBox="0 0 12 12"><path d="M6 1.6 V10.4 M1.6 6 H10.4" stroke="#444746" stroke-width="1.2"/></svg>
<svg class="abs" style="left:72px;top:686px" width="14" height="12" viewBox="0 0 14 12"><path d="M1.4 2.6 H12.6 M1.4 6 H12.6 M1.4 9.4 H12.6" stroke="#444746" stroke-width="1.2"/></svg>

</div></body></html>
